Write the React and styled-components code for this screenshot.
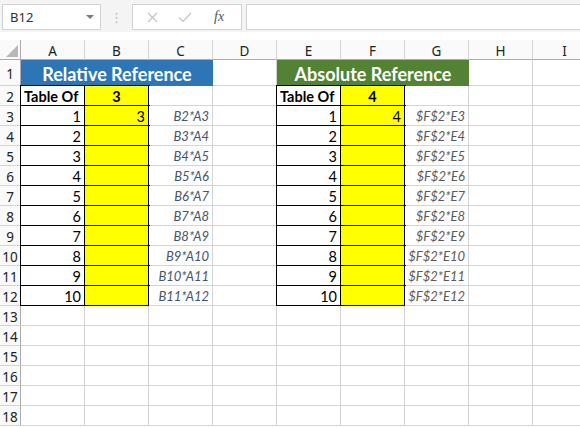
import React from 'react';
import styled, { createGlobalStyle } from 'styled-components';

const GlobalStyle = createGlobalStyle`
  html, body {
    margin: 0;
    padding: 0;
    background: #fff;
    overflow: hidden;
  }
`;

const Window = styled.div`
  width: 580px;
  height: 428px;
  overflow: hidden;
  background: #fff;
`;

const FormulaBar = styled.div`
  display: flex;
  align-items: stretch;
  height: 26px;
  padding: 4px 0 2px 2px;
  background: #f4f4f4;
  margin-bottom: 8px;
`;

const NameBox = styled.div`
  display: flex;
  align-items: center;
  justify-content: space-between;
  width: 99px;
  box-sizing: border-box;
  padding: 0 6px 0 7px;
  background: #fff;
  border: 1px solid #d2d2d2;
  font-family: "Noto Sans", sans-serif;
  font-size: 13px;
  color: #333;
`;

const Caret = styled.span`
  width: 0;
  height: 0;
  border-left: 4px solid transparent;
  border-right: 4px solid transparent;
  border-top: 4px solid #7a7a7a;
`;

const Grip = styled.div`
  width: 31px;
  display: flex;
  align-items: center;
  justify-content: center;
  color: #b4b4b4;
  font-size: 13px;
  font-family: "DejaVu Sans", sans-serif;
`;

const FxBox = styled.div`
  display: flex;
  align-items: center;
  width: 110px;
  box-sizing: border-box;
  padding: 0 10px 0 14px;
  gap: 20px;
  background: #fff;
  border: 1px solid #d2d2d2;
  margin-right: 4px;
`;

const Fx = styled.span`
  font-family: "Liberation Serif", serif;
  font-style: italic;
  font-size: 14px;
  color: #555;
  margin-left: 2px;
`;

const FormulaInput = styled.div`
  flex: 1;
  background: #fff;
  border: 1px solid #d2d2d2;
  border-right: none;
`;

const Sheet = styled.div`
  display: grid;
  grid-template-columns: 21px repeat(9, 64px);
  grid-template-rows: 20px 26px repeat(18, 20px);
  font-family: Lato, "Noto Sans", sans-serif;
  font-size: 14.5px;
  color: #000;
`;

const Corner = styled.div`
  position: relative;
  background: #fafafa;
  border-right: 1px solid #ababab;
  border-bottom: 1px solid #ababab;
`;

const CornerMark = styled.svg`
  position: absolute;
  right: 2px;
  bottom: 2px;
`;

const ColHead = styled.div`
  display: flex;
  align-items: center;
  justify-content: center;
  background: #fafafa;
  border-right: 1px solid #d4d4d4;
  border-bottom: 1px solid #ababab;
  font-family: "Noto Sans", sans-serif;
  font-size: 13.5px;
  color: #222;
  padding-top: 2px;
`;

const RowHead = styled.div`
  display: flex;
  align-items: center;
  justify-content: center;
  background: #fafafa;
  border-right: 1px solid #ababab;
  border-bottom: 1px solid #d4d4d4;
  font-family: "Noto Sans", sans-serif;
  font-size: 13.5px;
  color: #222;
  padding-top: 2px;
`;

const Cell = styled.div`
  display: flex;
  align-items: center;
  justify-content: ${p => p.$align === 'center' ? 'center' : p.$align === 'right' ? 'flex-end' : 'flex-start'};
  min-width: 0;
  padding: 1px 3px 0 3px;
  background: ${p => p.$bg || '#fff'};
  border-right: 1px solid ${p => p.$boxed ? '#000' : '#d4d4d4'};
  border-bottom: 1px solid ${p => p.$boxed ? '#000' : '#d4d4d4'};
  box-shadow: ${p => p.$boxed ? '0 0 0 1px #000' : 'none'};
  font-weight: ${p => p.$bold ? 700 : 400};
  font-style: ${p => p.$italic ? 'italic' : 'normal'};
  font-size: ${p => p.$italic ? '13px' : 'inherit'};
  color: ${p => p.$color || '#000'};
  white-space: nowrap;
`;

const CellText = styled.span`
  flex-shrink: 0;
`;

const Banner = styled.div`
  grid-column: span 3;
  display: flex;
  align-items: center;
  justify-content: center;
  background: ${p => p.$bg};
  color: #fff;
  font-weight: 700;
  font-size: 18px;
  padding-top: 1px;
`;

const COLS = ['A', 'B', 'C', 'D', 'E', 'F', 'G', 'H', 'I'];
const YELLOW = '#ffff00';

// what sits in a cell of the two tables, by column letter and row number
const cellFor = (col, row) => {
  if (row === 2) {
    if (col === 'A' || col === 'E') return { text: 'Table Of', bold: true, boxed: true };
    if (col === 'B') return { text: '3', bold: true, boxed: true, bg: YELLOW, align: 'center' };
    if (col === 'F') return { text: '4', bold: true, boxed: true, bg: YELLOW, align: 'center' };
  }
  if (row >= 3 && row <= 12) {
    const n = row - 2;
    if (col === 'A' || col === 'E') return { text: String(n), boxed: true, align: 'right' };
    if (col === 'B') return { text: row === 3 ? '3' : '', boxed: true, bg: YELLOW, align: 'right' };
    if (col === 'F') return { text: row === 3 ? '4' : '', boxed: true, bg: YELLOW, align: 'right' };
    if (col === 'C') return { text: `B${row - 1}*A${row}`, italic: true, color: '#44546a', align: 'right' };
    if (col === 'G') return { text: `$F$2*E${row}`, italic: true, color: '#595959', align: 'right' };
  }
  return { text: '' };
};

const SheetRow = ({ row }) => (
  <>
    <RowHead>{row}</RowHead>
    {row === 1 ? (
      <>
        <Banner $bg="#2e75b6">Relative Reference</Banner>
        <Cell />
        <Banner $bg="#548235">Absolute Reference</Banner>
        <Cell />
        <Cell />
      </>
    ) : (
      COLS.map(col => {
        const c = cellFor(col, row);
        return (
          <Cell
            key={col}
            $align={c.align}
            $bg={c.bg}
            $bold={c.bold}
            $italic={c.italic}
            $color={c.color}
            $boxed={c.boxed}
          >
            {c.text && <CellText>{c.text}</CellText>}
          </Cell>
        );
      })
    )}
  </>
);

export default function App() {
  const rows = Array.from({ length: 18 }, (_, i) => i + 1);
  return (
    <Window>
      <GlobalStyle />
      <FormulaBar>
        <NameBox>
          B12
          <Caret />
        </NameBox>
        <Grip>⋮</Grip>
        <FxBox>
          <svg width="11" height="11" viewBox="0 0 11 11">
            <path d="M1 1 L10 10 M10 1 L1 10" stroke="#c4c4c4" strokeWidth="1.2" fill="none" />
          </svg>
          <svg width="14" height="11" viewBox="0 0 14 11">
            <path d="M1 5.5 L5 9.5 L13 1" stroke="#c4c4c4" strokeWidth="1.2" fill="none" />
          </svg>
          <Fx>fx</Fx>
        </FxBox>
        <FormulaInput />
      </FormulaBar>
      <Sheet>
        <Corner>
          <CornerMark width="12" height="12" viewBox="0 0 12 12">
            <polygon points="12,0 12,12 0,12" fill="#b8b8b8" />
          </CornerMark>
        </Corner>
        {COLS.map(c => <ColHead key={c}>{c}</ColHead>)}
        {rows.map(r => <SheetRow key={r} row={r} />)}
      </Sheet>
    </Window>
  );
}
